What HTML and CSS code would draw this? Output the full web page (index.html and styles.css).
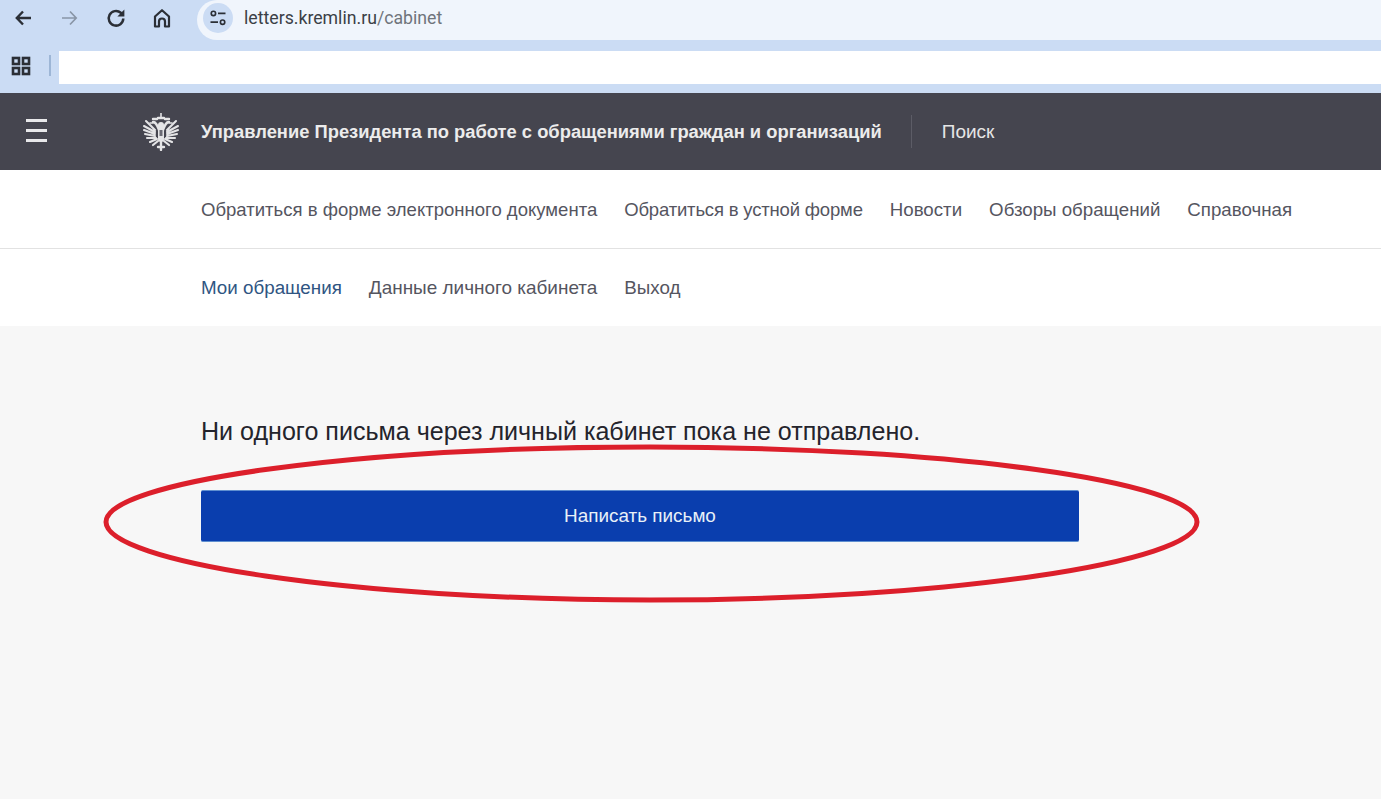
FILE: index.html
```html
<!DOCTYPE html>
<html lang="ru">
<head>
<meta charset="utf-8">
<title>letters.kremlin.ru/cabinet</title>
<link rel="stylesheet" href="styles.css">
</head>
<body>
<div class="chrome">
  <div class="toolbar">
    <div class="tools">
      <svg class="ico" viewBox="0 0 24 24"><path d="M19 12H5M11 5.5L4.8 12l6.2 6.5" fill="none" stroke="#2b2f36" stroke-width="2.4"/></svg>
      <svg class="ico" viewBox="0 0 24 24"><path d="M4 12h14M12 5.5l6.2 6.5-6.2 6.5" fill="none" stroke="#8995a6" stroke-width="1.7"/></svg>
      <svg class="ico" viewBox="0 0 24 24"><path d="M19.3 12.5A7.3 7.3 0 1 1 16.8 6.8L19 8.8" fill="none" stroke="#2b2f36" stroke-width="2.5"/><path d="M20.4 3.5V10.5h-7z" fill="#2b2f36"/></svg>
      <svg class="ico" viewBox="0 0 24 24"><path d="M5 20.5V10.5L12 4.2l7 6.3v10h-4v-5a3 3 0 0 0-6 0v5z" fill="none" stroke="#2b2f36" stroke-width="2.2" stroke-linejoin="round"/></svg>
    </div>
    <div class="omnibox">
      <span class="site-btn">
        <svg viewBox="0 0 24 24" class="site-ico"><circle cx="6.5" cy="6.5" r="2.6" fill="none" stroke="#2b2f36" stroke-width="2"/><path d="M12 6.5h9M3 17h9" stroke="#2b2f36" stroke-width="2.2"/><circle cx="17.5" cy="17" r="2.6" fill="none" stroke="#2b2f36" stroke-width="2"/></svg>
      </span>
      <span class="url">letters.kremlin.ru<span class="url-path">/cabinet</span></span>
    </div>
  </div>
  <div class="bookmarks">
    <svg class="apps" viewBox="0 0 20 20"><g fill="none" stroke="#2b2f36" stroke-width="2.6"><rect x="2" y="2" width="6" height="6"/><rect x="12" y="2" width="6" height="6"/><rect x="2" y="12" width="6" height="6"/><rect x="12" y="12" width="6" height="6"/></g></svg>
    <span class="sep"></span>
    <div class="blank"></div>
  </div>
</div>
<header class="site-head">
  <div class="burger"><span></span><span></span><span></span></div>
  <svg class="emblem" viewBox="0 0 38 38">
    <g fill="none" stroke="#e4e4e6" stroke-linecap="round">
      <path d="M19 0v4" stroke-width="1.6"/>
      <path d="M16 5h6M11 6h4M23 6h4" stroke-width="2.4"/>
      <path d="M11 9c3 0 4 3 6 8M27 9c-3 0-4 3-6 8" stroke-width="2.4"/>
      <path d="M11 10H8M27 10h3" stroke-width="1.6"/>
      <g stroke-width="2.1">
        <path d="M13 17L4 8M13 19L2 13M13 21L2 17M13 23L3 21M14 25L5 25M15 26L8 29"/>
        <path d="M25 17l9-9M25 19l11-6M25 21l11-4M25 23l10-2M24 25l9 0M23 26l7 3"/>
      </g>
      <path d="M19 12v14" stroke-width="6"/>
      <path d="M16 28L11 32M22 28l5 4" stroke-width="2.2"/>
      <path d="M19 26v11M16 34h6" stroke-width="2.4"/>
    </g>
    <path d="M17.5 17h3v6h-3z" fill="#6a6a74"/>
  </svg>
  <strong class="org">Управление Президента по работе с обращениями граждан и организаций</strong>
  <span class="head-rule"></span>
  <span class="search">Поиск</span>
</header>
<nav class="nav nav-main">
  <a class="first">Обратиться в форме электронного документа</a>
  <a class="tight">Обратиться в устной форме</a>
  <a class="wide">Новости</a>
  <a class="wide">Обзоры обращений</a>
  <a class="wide">Справочная</a>
</nav>
<nav class="nav nav-sub">
  <a class="active">Мои обращения</a>
  <a class="cabinet">Данные личного кабинета</a>
  <a>Выход</a>
</nav>
<main class="content">
  <p class="msg">Ни одного письма через личный кабинет пока не отправлено.</p>
  <button class="write">Написать письмо</button>
</main>
<svg class="circle" viewBox="0 0 1381 799"><path d="M106 522C106 482 350 447 650 447C950 447 1197 482 1197 522C1197 562 950 600 650 600C350 600 106 562 106 522Z" fill="none" stroke="#dc1f2b" stroke-width="5"/></svg>
</body>
</html>
```
FILE: styles.css
```css
* { box-sizing: border-box; }
html, body { margin: 0; height: 100%; }
body {
  width: 1381px;
  height: 799px;
  overflow: hidden;
  background: #f7f7f7;
  font-family: "Liberation Sans", Arial, sans-serif;
  position: relative;
}
.chrome { background: #cbdcf4; height: 93px; }
.toolbar { display: flex; height: 40px; }
.tools { display: flex; gap: 22px; padding: 6px 0 0 12px; width: 197px; }
.ico { width: 24px; height: 24px; }
.omnibox {
  flex: 1;
  display: flex;
  align-items: center;
  background: #f0f5fc;
  border-radius: 20px 0 0 20px;
  padding-left: 6px;
  height: 40px;
}
.site-btn {
  width: 30px; height: 30px; border-radius: 50%;
  background: #cbdcf4;
  display: flex; align-items: center; justify-content: center;
  margin-top: -4px;
}
.site-ico { width: 20px; height: 20px; }
.url { margin-left: 11px; margin-top: -4px; font: 17.7px "Roboto", "Liberation Sans", sans-serif; color: #3b3f46; }
.url-path { color: #6f747b; }
.bookmarks { display: flex; align-items: flex-start; height: 53px; padding-top: 11px; }
.apps { width: 20px; height: 20px; margin: 5px 0 0 11px; }
.sep { width: 2px; height: 21px; background: #9db6d6; margin: 4px 8px 0 18px; }
.blank { flex: 1; height: 33px; background: #fff; }
.site-head {
  height: 77px;
  background: #45454f;
  display: flex;
  align-items: center;
  color: #f2f2f2;
}
.burger { width: 21px; margin: -3px 0 0 26px; display: flex; flex-direction: column; gap: 7px; }
.burger span { height: 3px; background: #e8e8ea; }
.emblem { width: 38px; height: 38px; margin: 0 0 0 95px; filter: blur(0.4px); }
.org { font-size: 18.35px; margin: 1px 0 0 21px; white-space: nowrap; color: #ececec; }
.head-rule { width: 1px; height: 33px; background: #5c5c66; margin: 0 30px 0 29px; }
.search { font-size: 19px; margin-top: 1px; color: #e6e6e6; }
.nav { display: flex; gap: 27px; padding-left: 201px; align-items: center; background: #fff; font-size: 18.5px; color: #55555f; }
.nav-main { height: 79px; border-bottom: 1px solid #e2e2e2; padding-top: 1px; }
.nav-sub { height: 77px; padding-top: 1px; font-size: 18.8px; }
.first { font-size: 18.55px; }
.tight { letter-spacing: -0.18px; }
.wide { font-size: 18.7px; }
.cabinet { font-size: 18.95px; }
.active { color: #2f5582; }
.content { padding: 90px 0 0 201px; }
.msg { margin: 0 0 44px; font-size: 25.07px; line-height: 30px; color: #24242c; }
.write {
  display: block;
  width: 878px;
  height: 52px;
  padding-top: 1px;
  background: #0a3eae;
  border: 1px solid #5f8fd0;
  border-width: 1px 0;
  border-radius: 2px;
  color: #e8f0f8;
  font: 18.9px "Liberation Sans", Arial, sans-serif;
}
.circle { position: absolute; left: 0; top: 0; width: 1381px; height: 799px; pointer-events: none; }
```
